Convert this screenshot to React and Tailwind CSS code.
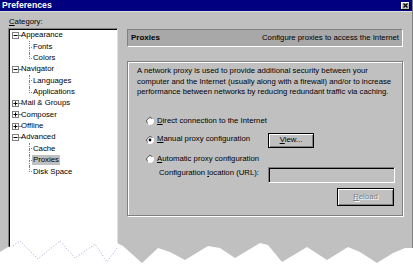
import React from "react";

function Box({ plus }) {
  return (
    <svg width="7" height="7" viewBox="0 0 7 7" className="shrink-0">
      <rect x="0.5" y="0.5" width="6" height="6" fill="#fff" stroke="#808080" />
      <path d="M1.5 3.5H5.5" stroke="#000" />
      {plus && <path d="M3.5 1.5V5.5" stroke="#000" />}
    </svg>
  );
}

function Top({ label, plus }) {
  return (
    <div className="h-[11.33px] flex items-center pl-[2px]">
      <Box plus={plus} />
      <span className="w-[2px] h-0 border-t border-dotted border-[#808080]" />
      <span className="whitespace-nowrap">{label}</span>
    </div>
  );
}

function Child({ label, last, selected }) {
  return (
    <div className="h-[11.33px] flex items-stretch">
      <span className="w-[19px] shrink-0" />
      <span className="w-[3px] flex flex-col shrink-0">
        <span className="flex-1 border-l border-b border-dotted border-[#808080]" />
        <span className={"flex-1 " + (last ? "" : "border-l border-dotted border-[#808080]")} />
      </span>
      <span className="flex items-center">
        <span className={"px-[1px] leading-[10px] whitespace-nowrap " + (selected ? "bg-[#c0c0c0]" : "")}>{label}</span>
      </span>
    </div>
  );
}

function Radio({ checked }) {
  return (
    <svg width="8" height="8" viewBox="0 0 8 8" className="shrink-0">
      <circle cx="4" cy="4" r="3.5" fill="#fff" stroke="#fff" />
      <path d="M1.53 6.47 A3.5 3.5 0 0 1 6.47 1.53" stroke="#404040" fill="none" />
      {checked && <circle cx="4" cy="4" r="1.4" fill="#000" />}
    </svg>
  );
}

export default function App() {
  return (
    <div className="relative w-[413px] h-[271px] overflow-hidden bg-white font-['Liberation_Sans',Arial,sans-serif] text-[7.75px] leading-[10.5px] text-black">
      <div className="flex flex-col h-full bg-[#c0c0c0] border-r border-[#808080]">
        {/* title bar */}
        <div className="h-[11px] bg-[#000080] flex items-center justify-between pl-[2px] pr-[2px] shrink-0">
          <span className="text-white font-bold text-[8.7px] leading-[11px]">Preferences</span>
          <span className="w-[9px] h-[8px] bg-[#c0c0c0] border-r border-b border-black shadow-[inset_1px_1px_0_#fff] flex items-center justify-center">
            <svg width="5" height="5" viewBox="0 0 5 5">
              <path d="M0.5 0.5L4.5 4.5M4.5 0.5L0.5 4.5" stroke="#000" strokeWidth="1.2" />
            </svg>
          </span>
        </div>

        {/* body */}
        <div className="flex flex-1 border-t border-[#dfdfdf]">
          {/* left column */}
          <div className="flex flex-col w-[118px] pl-[8px] pt-[5px] shrink-0">
            <div className="leading-[10px] pl-[1px]">
              <span className="underline">C</span>ategory:
            </div>
            <div className="mt-[1px] flex-1 bg-white border border-t-[#808080] border-l-[#808080] border-b-white border-r-[#dfdfdf] shadow-[inset_1px_1px_0_#000] pt-[1px] pl-[1px]">
              <Top label="Appearance" />
              <Child label="Fonts" />
              <Child label="Colors" last />
              <Top label="Navigator" />
              <Child label="Languages" />
              <Child label="Applications" last />
              <Top label="Mail & Groups" plus />
              <Top label="Composer" plus />
              <Top label="Offline" plus />
              <Top label="Advanced" />
              <Child label="Cache" />
              <Child label="Proxies" selected />
              <Child label="Disk Space" last />
            </div>
          </div>

          {/* right column */}
          <div className="flex flex-col w-[276px] ml-[9px] pt-[17px]">
            <div className="h-[18px] bg-[#a8a8a8] border border-t-[#808080] border-l-[#808080] border-b-white border-r-white flex items-center justify-between pl-[3px] pr-[3px]">
              <span className="font-bold text-[8px]">Proxies</span>
              <span>Configure proxies to access the Internet</span>
            </div>

            <div className="mt-[14px] h-[155px] border border-[#808080] shadow-[inset_1px_1px_0_#fff,1px_1px_0_#fff] pl-[9px] pt-[4px] flex flex-col">
              <p>
                A network proxy is used to provide additional security between your
                <br />
                computer and the Internet (usually along with a firewall) and/or to increase
                <br />
                performance between networks by reducing redundant traffic via caching.
              </p>

              <div className="mt-[17.5px] h-[12px] flex items-center gap-[3px] pl-[9px]">
                <Radio />
                <span>
                  <span className="underline">D</span>irect connection to the Internet
                </span>
              </div>

              <div className="mt-[6px] h-[15px] flex items-center pl-[9px]">
                <div className="w-[122px] flex items-center gap-[3px] -mt-[2px]">
                  <Radio checked />
                  <span>
                    <span className="underline">M</span>anual proxy configuration
                  </span>
                </div>
                <div className="w-[46px] h-[15px] border border-black bg-[#c0c0c0] shadow-[inset_1px_1px_0_#fff,inset_-1px_-1px_0_#808080] flex items-center justify-center">
                  <span>
                    <span className="underline">V</span>iew...
                  </span>
                </div>
              </div>

              <div className="mt-[5px] h-[12px] flex items-center gap-[3px] pl-[9px]">
                <Radio />
                <span>
                  <span className="underline">A</span>utomatic proxy configuration
                </span>
              </div>

              <div className="mt-[2px] h-[16px] flex items-center pl-[22px]">
                <span className="w-[109px] -mt-[3px]">
                  Configuration <span className="underline">l</span>ocation (URL):
                </span>
                <div className="w-[127px] h-[16px] bg-[#c0c0c0] border border-t-[#808080] border-l-[#808080] border-b-white border-r-white shadow-[inset_1px_1px_0_#000]" />
              </div>

              <div className="mt-[5px] flex justify-end pr-[8px]">
                <div className="w-[57px] h-[18px] border border-black bg-[#c0c0c0] shadow-[inset_1px_1px_0_#fff,inset_-1px_-1px_0_#808080] flex items-center justify-center">
                  <span className="text-[#808080] [text-shadow:1px_1px_0_#fff]">
                    <span className="underline">R</span>eload
                  </span>
                </div>
              </div>
            </div>
          </div>
        </div>
      </div>

      {/* torn paper edge */}
      <svg className="absolute inset-0 pointer-events-none" width="413" height="271" viewBox="0 0 413 271">
        <path
          d="M0 252 L8 247 L13 246 L20 241 L38 259 L60 241 L75 258 L95 244 L107 262 L117 248 L117 243 L123 246 L142 263 L158 248 L170 252 L185 260 L208 246 L220 248 L235 258 L255 246 L260 243 L268 245 L282 262 L307 247 L327 260 L348 247 L360 252 L377 263 L393 253 L405 248 L413 248 L413 271 L0 271 Z"
          fill="#fff"
        />
        <path
          d="M13 246 L20 241 L38 259 L60 241 L75 258 L95 244 L107 262 L117 248"
          fill="none"
          stroke="#8c8cc8"
          strokeWidth="0.8"
          strokeDasharray="1 2"
        />
      </svg>
    </div>
  );
}
